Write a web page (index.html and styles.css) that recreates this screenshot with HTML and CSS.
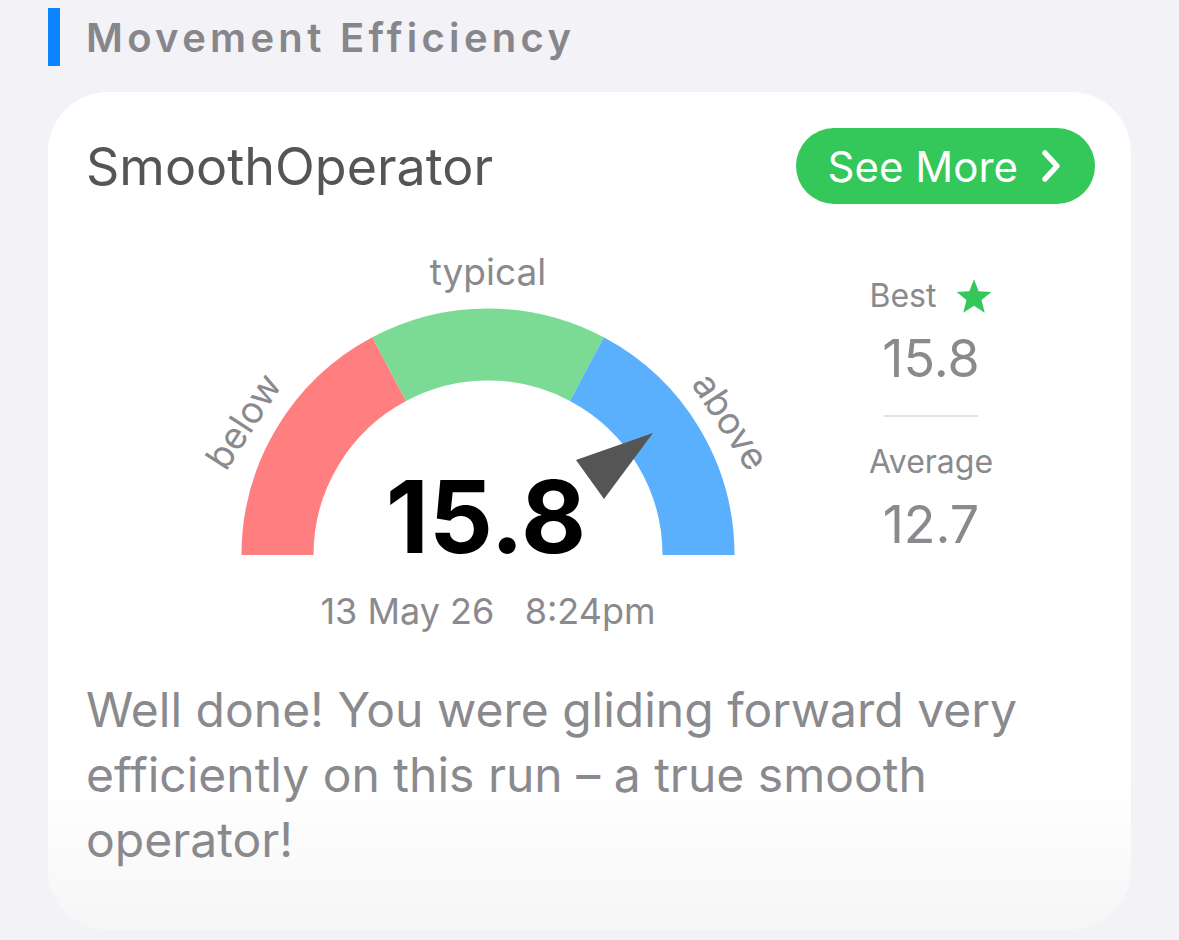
FILE: index.html
```html
<!DOCTYPE html>
<html lang="en">

<head>
  <meta charset="UTF-8">
  <meta name="viewport" content="width=device-width, initial-scale=1.0">
  <title>Movement Efficiency</title>
  <link rel="stylesheet" href="styles.css">
</head>

<body>
  <header class="section-head">
    <span class="accent"></span>
    <h2>Movement Efficiency</h2>
  </header>

  <section class="card">
    <div class="card-top">
      <h3 class="card-title">SmoothOperator</h3>
      <a class="see-more" href="#">
        See More
        <svg class="chevron" viewBox="0 0 22 36" width="22" height="36">
          <path d="M5 5 L17 18 L5 31" />
        </svg>
      </a>
    </div>

    <div class="gauge-row">
      <div class="gauge">
        <svg class="dial" viewBox="0 0 600 350" width="600" height="350">
          <!-- three bands, centre at 300,310 -->
          <path class="band band-low" d="M89.5 310 A210.5 210.5 0 0 1 201.17 124.15" />
          <path class="band band-mid" d="M201.17 124.15 A210.5 210.5 0 0 1 398.83 124.15" />
          <path class="band band-high" d="M398.83 124.15 A210.5 210.5 0 0 1 510.5 310" />

          <text class="band-label" x="300" y="40" text-anchor="middle">typical</text>
          <text class="band-label" transform="translate(55 176) rotate(-57)" text-anchor="middle" dominant-baseline="central">below</text>
          <text class="band-label" transform="translate(543 176) rotate(57)" text-anchor="middle" dominant-baseline="central">above</text>

          <polygon class="needle" points="465,188 388,215 416,254" />
          <text class="dial-value" x="298" y="308" text-anchor="middle">15.8</text>
        </svg>
        <div class="gauge-date">13 May 26&nbsp;&nbsp; 8:24pm</div>
      </div>

      <div class="stats">
        <div class="stat-label">
          Best
          <svg class="star" viewBox="2 2 20 19" width="36" height="34">
            <path d="M12 2.2 L14.6 8.9 L21.7 9.3 L16.2 13.8 L18 20.8 L12 16.9 L6 20.8 L7.8 13.8 L2.3 9.3 L9.4 8.9 Z" />
          </svg>
        </div>
        <div class="stat-value">15.8</div>
        <hr class="stat-rule">
        <div class="stat-label">Average</div>
        <div class="stat-value">12.7</div>
      </div>
    </div>

    <p class="summary">Well done! You were gliding forward very efficiently on this run – a true smooth operator!</p>
  </section>
</body>

</html>
```

FILE: styles.css
```css
* {
  margin: 0;
  padding: 0;
  box-sizing: border-box;
}

body {
  background: #f2f2f7;
  font-family: Inter, "Liberation Sans", sans-serif;
  color: #8a8a8e;
}

.section-head {
  display: flex;
  align-items: center;
  height: 58px;
  margin-top: 8px;
  padding-left: 48px;
}

.accent {
  width: 12px;
  height: 58px;
  background: #0a84ff;
}

.section-head h2 {
  margin-left: 26px;
  font-size: 40px;
  font-weight: 600;
  letter-spacing: 4.3px;
  color: #86868b;
}

.card {
  height: 838px;
  margin: 26px 48px 0;
  padding: 36px 36px 0 38px;
  overflow: hidden;
  background: linear-gradient(#fff 0, #fff 82%, #f6f6f7 100%);
  border-radius: 60px;
}

.card-top {
  display: flex;
  align-items: center;
  justify-content: space-between;
  height: 76px;
}

.card-title {
  font-size: 52px;
  font-weight: 400;
  color: #555;
}

.see-more {
  display: flex;
  align-items: center;
  gap: 22px;
  height: 76px;
  padding: 0 33px 0 32px;
  border-radius: 38px;
  background: #34c759;
  color: #fff;
  font-size: 42px;
  text-decoration: none;
}

.chevron path {
  fill: none;
  stroke: #fff;
  stroke-width: 5.5;
  stroke-linecap: round;
  stroke-linejoin: round;
}

.gauge-row {
  display: flex;
  margin-top: 41px;
}

.gauge {
  width: 600px;
  margin-left: 102px;
}

.dial {
  display: block;
}

.band {
  fill: none;
  stroke-width: 72;
}

.band-low {
  stroke: #ff7e80;
}

.band-mid {
  stroke: #7bdb95;
}

.band-high {
  stroke: #5bb0fe;
}

.band-label {
  font-size: 37px;
  fill: #8a8a8e;
}

.needle {
  fill: #555;
}

.dial-value {
  font-size: 100px;
  font-weight: 700;
  fill: #000;
}

.gauge-date {
  font-size: 36px;
  line-height: 32px;
  text-align: center;
}

.stats {
  display: flex;
  flex-direction: column;
  align-items: center;
  width: 180px;
  margin-left: 53px;
  padding-top: 33px;
}

.stat-label {
  display: flex;
  align-items: center;
  gap: 20px;
  height: 36px;
  font-size: 32px;
  line-height: 36px;
}

.star path {
  fill: #34c759;
}

.stat-value {
  margin-top: 17px;
  font-size: 52px;
  line-height: 56px;
}

.stat-rule {
  width: 94px;
  height: 2px;
  margin: 28px 0 27px;
  border: 0;
  background: #e3e3e5;
}

.summary {
  margin-top: 50px;
  font-size: 48px;
  line-height: 65px;
}
```
